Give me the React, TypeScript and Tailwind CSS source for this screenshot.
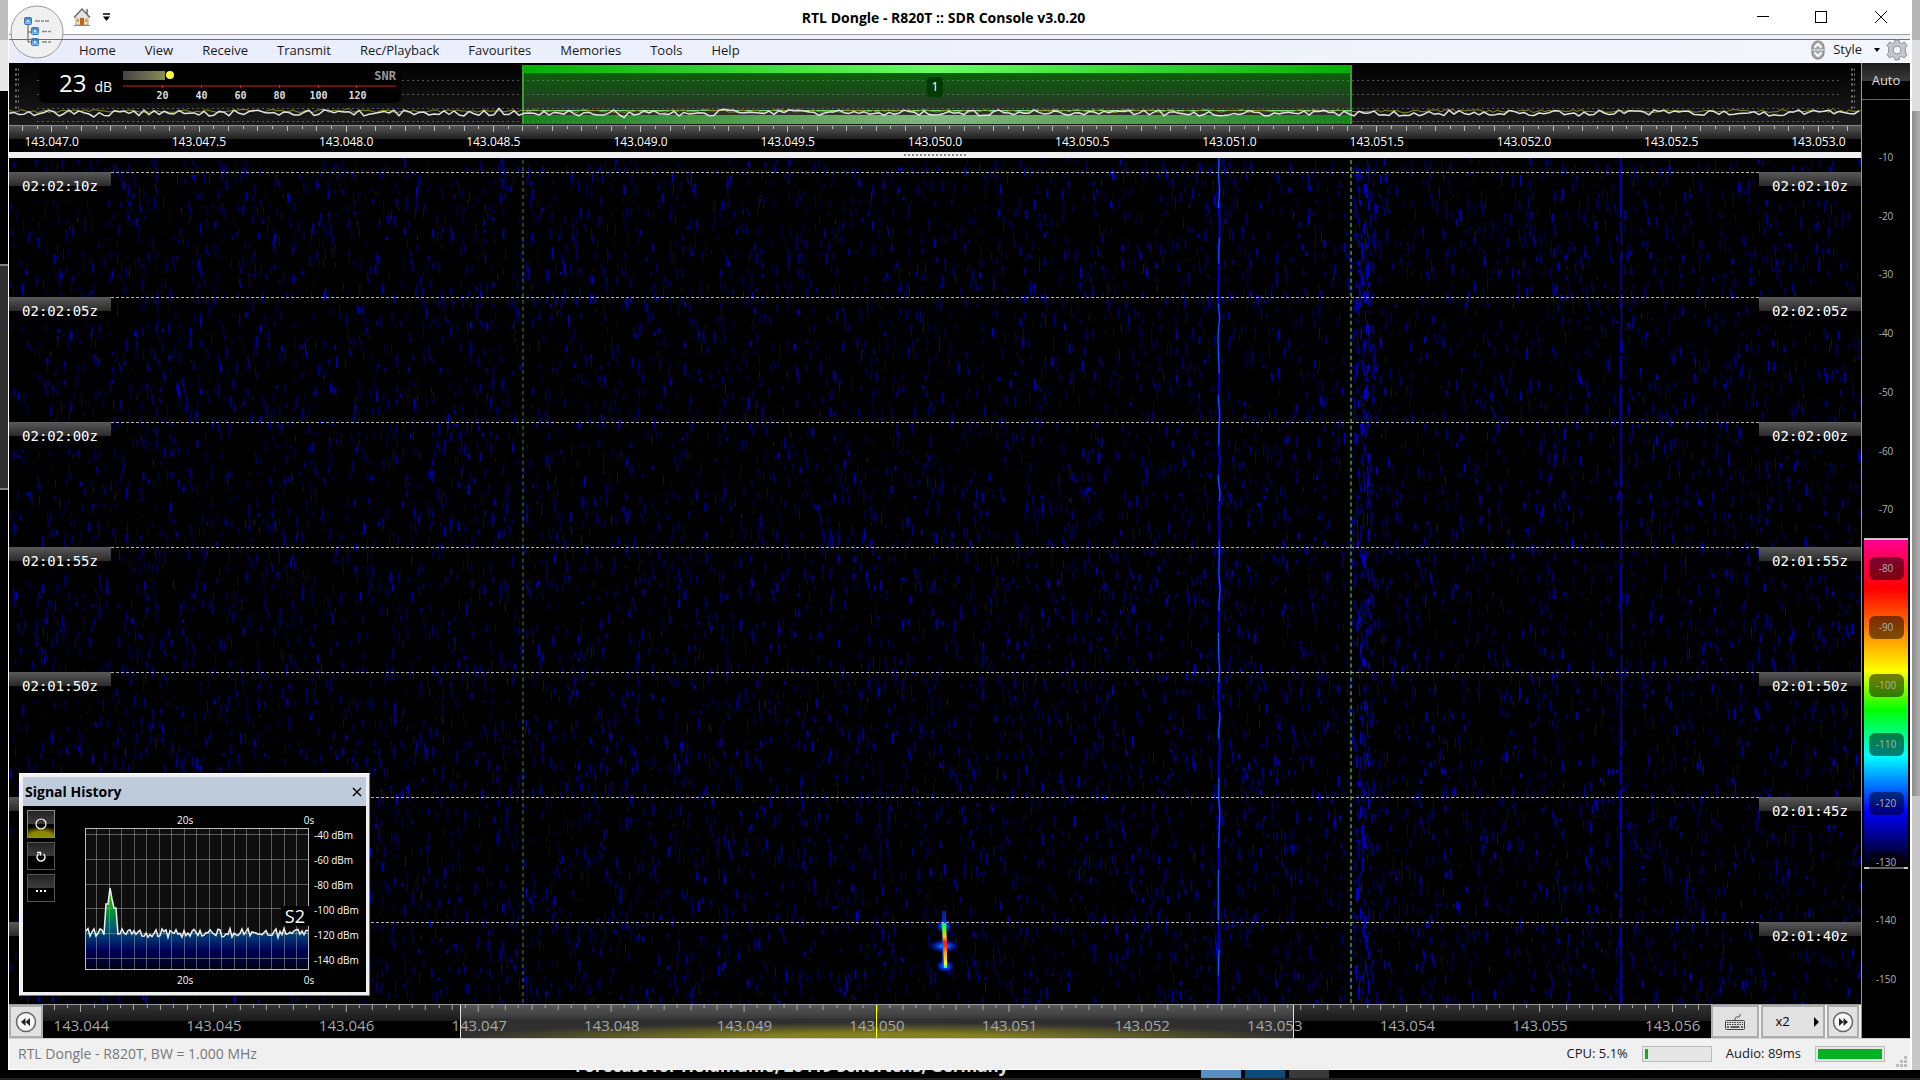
import type { ReactNode } from 'react';
import { useState } from 'react';

const FALL_W = 1852;
const FALL_H = 847;

const menuItems = ['Home', 'View', 'Receive', 'Transmit', 'Rec/Playback', 'Favourites', 'Memories', 'Tools', 'Help'];
const topFrequencies = Array.from({ length: 13 }, (_, i) => (143.047 + i * 0.0005).toFixed(4).replace(/(\d)$/, '.$1'));
const bottomFrequencies = Array.from({ length: 13 }, (_, i) => (143.044 + i * 0.001).toFixed(3));
const timeMarks = ['02:02:10z', '02:02:05z', '02:02:00z', '02:01:55z', '02:01:50z', '02:01:45z', '02:01:40z'];
const levels = Array.from({ length: 15 }, (_, i) => -10 * (i + 1));
const powerLabels = ['-40 dBm', '-60 dBm', '-80 dBm', '-100 dBm', '-120 dBm', '-140 dBm'];

// small seeded generator, so the noise is the same on every render
function createRandom(seed: number) {
  let s = seed;
  return () => {
    s = (s * 1664525 + 1013904223) % 4294967296;
    return s / 4294967296;
  };
}

function streaks(seed: number, count: number, x0: number, x1: number, maxLen: number) {
  const rnd = createRandom(seed);
  let d = '';
  for (let i = 0; i < count; i++) {
    const x = Math.floor(x0 + rnd() * (x1 - x0));
    const y = Math.floor(rnd() * FALL_H);
    const len = 3 + Math.floor(rnd() * maxLen);
    const lean = rnd() > 0.7 ? 1 : 0;
    d += `M${x + 0.5} ${y}l${lean} ${len}`;
  }
  return d;
}

function wobble(seed: number, x: number, step: number, amount: number) {
  const rnd = createRandom(seed);
  let d = `M${x} 0`;
  for (let y = step; y < FALL_H + step; y += step) {
    d += `L${(x + (rnd() - 0.5) * amount).toFixed(1)} ${y}`;
  }
  return d;
}

function trace(seed: number, width: number, base: number, amount: number, step: number) {
  const rnd = createRandom(seed);
  let d = '';
  for (let x = 0; x <= width; x += step) {
    const spike = rnd() > 0.95 ? (rnd() - 0.5) * amount : 0;
    const y = base + (rnd() - 0.5) * amount + spike;
    d += `${x === 0 ? 'M' : 'L'}${x} ${y.toFixed(1)}`;
  }
  return d;
}

const noise = [
  { color: '#000040', width: 2, d: streaks(11, 4600, 0, FALL_W, 9) },
  { color: '#00006c', width: 1, d: streaks(23, 4200, 0, FALL_W, 10) },
  { color: '#000090', width: 1, d: streaks(37, 2800, 0, FALL_W, 10) },
  { color: '#0000c0', width: 1, d: streaks(53, 1100, 0, FALL_W, 9) },
  { color: '#0000a8', width: 2, d: streaks(71, 520, 0, FALL_W, 7) },
  { color: '#000078', width: 2, d: streaks(83, 150, 1344, 1366, 12) },
  { color: '#0000c8', width: 1, d: streaks(97, 170, 1347, 1360, 12) },
];
const carrier = wobble(5, 1210, 16, 2);
const weakCarrier = wobble(8, 1612, 20, 1);
const spectrumPeak = trace(31, FALL_W, 48, 3, 4);
const spectrumLive = trace(47, FALL_W, 50, 6, 5);

function ticks(first: number, spacing: number, width: number, majorAt: number, major: number) {
  let d = '';
  for (let i = 0; first + i * spacing < width; i++) {
    const x = Math.round(first + i * spacing) + 0.5;
    const h = (i - majorAt) % 10 === 0 ? major : (i - majorAt) % 2 === 0 ? 5 : 3;
    d += `M${x} 0v${h}`;
  }
  return d;
}

function IconHome() {
  return (
    <svg width="18" height="20" viewBox="0 0 18 20">
      <rect x="13" y="2" width="2" height="5" fill="#9a8a80" />
      <path d="M3 9h12v9H3z" fill="#e9e2c8" stroke="#a0a098" strokeWidth="1" />
      <path d="M1 10.500L9 2l8 8.500" fill="#e4e4e4" stroke="#6a6a6a" strokeWidth="1.500" />
      <rect x="7" y="11" width="4" height="7" fill="#c4601c" />
      <path d="M4 12h2v3H4zM12 12h2v3h-2z" fill="#e0a030" />
      <path d="M1 18.500h16" stroke="#888" strokeWidth="1" />
    </svg>
  );
}

function AppOrb() {
  return (
    <svg width="54" height="54" viewBox="0 0 54 54">
      <defs>
        <linearGradient id="orbNode" x1="0" y1="0" x2="0" y2="1">
          <stop offset="0" stopColor="#3f7fc0" />
          <stop offset="1" stopColor="#8cc0ea" />
        </linearGradient>
      </defs>
      <circle cx="27" cy="27" r="26" fill="#f0f0f0" stroke="#999" />
      <path d="M18 20v17h5M18 27h5" fill="none" stroke="#555" strokeWidth="1" />
      <g fill="url(#orbNode)" stroke="#3a76b4" strokeWidth="1">
        <rect x="14.500" y="12.500" width="7" height="7" rx="1" />
        <rect x="21.500" y="22.500" width="7" height="7" rx="1" />
        <rect x="21.500" y="33.500" width="7" height="7" rx="1" />
      </g>
      <path d="M17 15h2v2h-2zM24 25h2v2h-2zM24 36h2v2h-2z" fill="#d8ecff" />
      <path d="M25 16h14M32 26.500h9M32 37h9" stroke="#888" strokeWidth="1.500" strokeDasharray="5 1 3 1" />
      <path d="M0 34.500h54" stroke="#6b6f6b" />
    </svg>
  );
}

function IconGear() {
  return (
    <svg width="22" height="22" viewBox="0 0 22 22">
      <g fill="#c4c7cc" stroke="#8d9196" strokeWidth="1">
        <path d="M9 1h4l.6 2.800 2 .9L18.300 3 21 6.500l-1.800 2.300.3 2.200-.3 2.200L21 15.500 18.300 19l-2.700-1.700-2 .9L13 21H9l-.6-2.800-2-.9L3.700 19 1 15.500l1.800-2.300-.3-2.200.3-2.200L1 6.500 3.700 3l2.700 1.700 2-.9z" strokeLinejoin="round" />
        <circle cx="11" cy="11" r="4" fill="#f2f5fc" />
      </g>
    </svg>
  );
}

function IconUpDown() {
  return (
    <svg width="14" height="20" viewBox="0 0 14 20">
      <rect x="1" y="1" width="12" height="18" rx="6" fill="#a8a8a8" stroke="#777" />
      <path d="M1 10h12" stroke="#eee" />
      <path d="M3.500 7.500L7 4l3.500 3.500M3.500 12.500L7 16l3.500-3.500" fill="none" stroke="#fff" strokeWidth="2" />
    </svg>
  );
}

function IconSkip({ forward = false }: { forward?: boolean }) {
  return (
    <svg width="22" height="22" viewBox="0 0 22 22">
      <circle cx="11" cy="11" r="9.500" fill="#f6f6f6" stroke="#666" strokeWidth="1.500" />
      {forward ? (
        <path d="M7 7l4.500 4L7 15zM11.500 7l4.500 4-4.500 4z" fill="#222" />
      ) : (
        <path d="M15 7l-4.500 4 4.500 4zM10.500 7L6 11l4.500 4z" fill="#222" />
      )}
    </svg>
  );
}

function IconKeyboard() {
  return (
    <svg width="22" height="18" viewBox="0 0 22 18">
      <path d="M11 7c0-3 1-3 3-3s2-1 2-3" fill="none" stroke="#444" strokeWidth="1" />
      <rect x="1.500" y="7.500" width="19" height="9" rx="1" fill="#ddd" stroke="#444" />
      <path d="M3 9.500h16M3 11.500h16" stroke="#333" strokeWidth="1.200" strokeDasharray="1.500 1" />
      <path d="M3 14h2M6.500 14h9M17 14h2" stroke="#333" strokeWidth="1.500" />
    </svg>
  );
}

function TitleBar() {
  return (
    <header className="flex h-[35px] shrink-0 items-center border-b border-[#a0a0a0] bg-white">
      <div className="flex w-[206px] items-center gap-2 pl-16">
        <button aria-label="Start page">
          <IconHome />
        </button>
        <button aria-label="Customise toolbar" className="pl-1">
          <svg width="7" height="8" viewBox="0 0 7 8">
            <path d="M0 1h7" stroke="#000" strokeWidth="1.500" />
            <path d="M0 3.500h7L3.500 8z" />
          </svg>
        </button>
      </div>
      <h1 className="flex-1 pt-px text-center text-sm font-bold text-black">RTL Dongle - R820T :: SDR Console v3.0.20</h1>
      <div className="flex w-[238px] justify-end pr-[2px]">
        <button className="flex w-[58px] justify-center" aria-label="Minimise">
          <svg width="12" height="12" viewBox="0 0 12 12"><path d="M0 5.500h12" stroke="#000" /></svg>
        </button>
        <button className="flex w-[58px] justify-center" aria-label="Maximise">
          <svg width="12" height="12" viewBox="0 0 12 12"><rect x=".5" y=".5" width="11" height="11" fill="none" stroke="#000" /></svg>
        </button>
        <button className="flex w-[58px] justify-center pl-1" aria-label="Close">
          <svg width="12" height="12" viewBox="0 0 12 12"><path d="M0 0l12 12M12 0L0 12" stroke="#000" /></svg>
        </button>
      </div>
    </header>
  );
}

function MenuBar() {
  return (
    <nav className="mt-1 flex h-6 shrink-0 items-center justify-between border-t border-[#6b6f6b] bg-linear-to-r from-[#e9edfb] to-[#f3f6fd] pl-14 text-[13px] text-[#1a1a1a]">
      <div className="flex gap-px pb-[2px]">
        {menuItems.map(item => (
          <button key={item} className="px-[14px]">{item}</button>
        ))}
      </div>
      <div className="flex items-center pr-[2px] pb-1">
        <IconUpDown />
        <button className="flex items-center gap-3 pr-[6px] pl-2">
          Style
          <svg width="6" height="4" viewBox="0 0 6 4"><path d="M0 0h6L3 4z" /></svg>
        </button>
        <button aria-label="Settings"><IconGear /></button>
      </div>
    </nav>
  );
}

function SignalMeter() {
  return (
    <div className="absolute top-1 left-[30px] flex h-9 w-[362px] rounded-md bg-black text-white">
      <div className="flex w-[84px] items-baseline gap-2 pl-5">
        <span className="text-2xl">23</span>
        <span className="text-sm">dB</span>
      </div>
      <div className="w-[273px] font-['DejaVu_Sans_Mono',monospace] font-bold">
        <div className="flex h-4 items-center justify-between">
          <div className="flex items-center gap-px">
            <div className="h-[9px] w-[42px] bg-linear-to-r from-[#444] to-[#8c8c50]" />
            <div className="size-2 rounded-full bg-[#ffff40]" />
          </div>
          <span className="pt-px text-xs text-[#999]">SNR</span>
        </div>
        <svg className="mt-[2px] block h-[3px] w-full" viewBox="0 0 273 3" preserveAspectRatio="none">
          <path d="M0 1h273M39.500 0v3M78.500 0v3M117.500 0v3M156.500 0v3M195.500 0v3M233.500 0v3" stroke="#d02020" />
        </svg>
        <div className="flex pl-5 text-[10px] leading-4 text-[#ddd]">
          {[20, 40, 60, 80, 100, 120].map(n => (
            <span key={n} className="w-[39px] text-center">{n}</span>
          ))}
        </div>
      </div>
    </div>
  );
}

function Spectrum() {
  const axisMarks = [6, 11, 16, 21, 27, 33, 38, 44];
  return (
    <section className="relative h-[62px] shrink-0 overflow-hidden bg-black">
      <svg className="block h-full w-full" viewBox="0 0 1852 62" preserveAspectRatio="none">
        <defs>
          <linearGradient id="spectrumBack" x1="0" y1="0" x2="0" y2="1">
            <stop offset="0" stopColor="#000" />
            <stop offset="1" stopColor="#1c1c1c" />
          </linearGradient>
          <linearGradient id="passTop">
            <stop offset="0" stopColor="#00b000" />
            <stop offset=".5" stopColor="#66ff66" />
            <stop offset="1" stopColor="#00b000" />
          </linearGradient>
          <linearGradient id="passBody" x1="0" y1="0" x2="0" y2="1">
            <stop offset="0" stopColor="#006c00" />
            <stop offset=".75" stopColor="#2c322c" />
          </linearGradient>
          <linearGradient id="passFoot">
            <stop offset="0" stopColor="#148014" />
            <stop offset=".5" stopColor="#84b884" />
            <stop offset="1" stopColor="#148014" />
          </linearGradient>
        </defs>
        <rect width="1852" height="62" fill="url(#spectrumBack)" />
        <rect x="513" y="2" width="830" height="59" fill="url(#passBody)" />
        <rect x="513" y="2" width="830" height="8" fill="url(#passTop)" />
        <rect x="513" y="52" width="830" height="9" fill="url(#passFoot)" />
        <path d="M514 2v59M1342 2v59" stroke="#3a9a3a" strokeWidth="2" />
        <path d="M28 17.500h1803M28 31.500h1803M28 45.500h1803M28 58.500h1803" stroke="#888" strokeOpacity=".6" strokeDasharray="2 3" />
        <path d="M513 47.500h830" stroke="#7be07b" />
        {axisMarks.map(y => (
          <path key={y} d={`M6 ${y + 0.5}h4M1842 ${y + 0.5}h4`} stroke="#777" strokeWidth="2" strokeDasharray="2 1" />
        ))}
        <path d={spectrumPeak} fill="none" stroke="#8c8c14" />
        <path d={spectrumLive} fill="none" stroke="#e0e0e0" strokeWidth="1.500" strokeLinejoin="round" />
      </svg>
      <SignalMeter />
      <span className="absolute top-[14px] left-1/2 -ml-2 flex h-5 w-4 items-center justify-center rounded-sm bg-[#003c00] text-[13px] text-white">1</span>
    </section>
  );
}

function TopScale() {
  return (
    <div className="h-[27px] shrink-0 overflow-hidden border-t border-[#888] bg-linear-to-b from-[#555] via-[#222] via-48% to-black to-52%">
      <svg className="block h-[6px] w-full" viewBox="0 0 1852 6" preserveAspectRatio="none">
        <path d={ticks(12.9, 14.72, 1852, 2, 6)} stroke="#bbb" />
      </svg>
      <div className="-mx-[31px] flex text-xs leading-5 text-white">
        {topFrequencies.map(f => (
          <span key={f} className="flex-1 text-center">{f}</span>
        ))}
      </div>
    </div>
  );
}

function TimeLabel({ children }: { children: ReactNode }) {
  return (
    <span className="flex h-7 w-[102px] items-center justify-center bg-linear-to-b from-[#5a5a5a] via-[#2a2a2a] via-50% to-black to-50% font-['DejaVu_Sans_Mono',monospace] text-sm text-white">
      {children}
    </span>
  );
}

function Waterfall() {
  return (
    <section className="relative min-h-0 flex-1 overflow-hidden bg-black">
      <svg className="absolute inset-0 h-full w-full" viewBox="0 0 1852 847" preserveAspectRatio="none">
        <defs>
          <radialGradient id="echo">
            <stop offset="0" stopColor="#00e0ff" />
            <stop offset=".35" stopColor="#0050ff" stopOpacity=".9" />
            <stop offset="1" stopColor="#0000ff" stopOpacity="0" />
          </radialGradient>
          <linearGradient id="echoCore" x1="0" y1="0" x2="0" y2="1">
            <stop offset="0" stopColor="#00ff60" />
            <stop offset=".15" stopColor="#60ff00" />
            <stop offset=".3" stopColor="#ffd000" />
            <stop offset=".42" stopColor="#ff2000" />
            <stop offset=".52" stopColor="#ff3000" />
            <stop offset=".65" stopColor="#ffa000" />
            <stop offset=".9" stopColor="#ffff00" />
            <stop offset="1" stopColor="#00ffb0" />
          </linearGradient>
        </defs>
        {noise.map((n, i) => (
          <path key={i} d={n.d} fill="none" stroke={n.color} strokeWidth={n.width} />
        ))}
        <path d={carrier} fill="none" stroke="#0000d8" strokeWidth="2" />
        <path d={carrier} fill="none" stroke="#0068ff" strokeWidth="1" strokeDasharray="50 30 26 40 70 22" />
        <path d={weakCarrier} fill="none" stroke="#0000c8" strokeWidth="1.500" strokeDasharray="60 3 24 6 40 2" />
        <path d="M871 600V730" stroke="#000050" />
        <ellipse cx="935" cy="769" rx="9" ry="8" fill="url(#echo)" />
        <ellipse cx="935" cy="789" rx="16" ry="7" fill="url(#echo)" />
        <ellipse cx="936" cy="809" rx="10" ry="7" fill="url(#echo)" />
        <path d="M935 754v58" stroke="#0040ff" strokeWidth="4" strokeOpacity=".6" />
        <path d="M933 766h4l1 20v25h-3l-1-22z" fill="url(#echoCore)" />
        <path d="M514 2v845" stroke="#3f8a3f" strokeWidth="1" strokeDasharray="4 3" />
        <path d="M1342 2v845" stroke="#3a723a" strokeWidth="2" strokeDasharray="4 3" />
      </svg>
      <div className="relative flex flex-col pt-[14px]">
        {timeMarks.map(t => (
          <div key={t} className="flex h-[125px] shrink-0 items-start">
            <TimeLabel>{t}</TimeLabel>
            <div className="flex-1 border-t border-dashed border-[#b0b0b0]" />
            <TimeLabel>{t}</TimeLabel>
          </div>
        ))}
      </div>
      <SignalHistory />
    </section>
  );
}

function ToolButton({ label, active = false, children }: { label: string; active?: boolean; children: ReactNode }) {
  return (
    <button
      aria-label={label}
      className={
        active
          ? 'flex size-7 items-center justify-center border border-[#888] bg-[radial-gradient(ellipse_90%_42%_at_bottom,#908c00_0%,#8a8600_50%,transparent_100%),linear-gradient(#222,#3c3c3c_48%,#000_50%)]'
          : 'flex size-7 items-center justify-center border border-[#555] bg-[linear-gradient(#222,#3c3c3c_48%,#000_50%)]'
      }
    >
      {children}
    </button>
  );
}

function HistoryChart() {
  const rnd = createRandom(19);
  let line = 'M0 101';
  for (let x = 1; x <= 223; x += 2) {
    let y = 105 + (rnd() - 0.5) * 9;
    if (x >= 20 && x <= 31) y = x < 24 ? 76 : x < 27 ? 76 - (x - 23) * 8 : x < 29 ? 68 + (x - 26) * 3 : 80;
    line += `L${x} ${y.toFixed(1)}`;
  }
  let grid = '';
  for (let i = 0; i < 17; i++) grid += `M${Math.round(11 + i * 12.5) + 0.5} 0v142`;
  for (let i = 0; i < 6; i++) grid += `M0 ${Math.round(6 + i * 24.8) + 0.5}h224`;
  return (
    <svg className="block" width="224" height="142" viewBox="0 0 224 142">
      <defs>
        <linearGradient id="history" gradientUnits="userSpaceOnUse" x1="0" y1="55" x2="0" y2="142">
          <stop offset="0" stopColor="#60c000" />
          <stop offset=".28" stopColor="#00a020" />
          <stop offset=".5" stopColor="#006070" />
          <stop offset=".65" stopColor="#002c70" />
          <stop offset=".78" stopColor="#000058" />
          <stop offset="1" stopColor="#000010" />
        </linearGradient>
      </defs>
      <rect width="224" height="142" fill="#0e0e0e" />
      <path d={`${line}V142H0z`} fill="url(#history)" />
      <path d={grid} stroke="#aaa" strokeOpacity=".5" />
      <path d={line} fill="none" stroke="#eee" strokeWidth="1.500" />
      <rect x=".5" y=".5" width="223" height="141" fill="none" stroke="#bbb" />
    </svg>
  );
}

function TimeAxis() {
  return (
    <div className="-mr-2 flex justify-between pl-[92px]">
      <span>20s</span>
      <span className="w-4 text-center">0s</span>
    </div>
  );
}

function SignalHistory() {
  const [open, setOpen] = useState(true);
  if (!open) return null;

  return (
    <div className="absolute bottom-2 left-[10px] w-[351px] border border-[#fff] border-r-[#777] border-b-[#777] bg-[#f0f0f0] p-[3px]">
      <div className="flex h-[29px] items-center justify-between bg-[#bdcbda] pr-1 pl-[2px]">
        <h2 className="pt-px text-sm font-bold text-black">Signal History</h2>
        <button aria-label="Close" onClick={() => setOpen(false)}>
          <svg width="10" height="10" viewBox="0 0 10 10"><path d="M1 1l8 8M9 1L1 9" stroke="#000" strokeWidth="1.500" /></svg>
        </button>
      </div>
      <div className="flex h-[186px] bg-black text-[10px] leading-4 text-white">
        <div className="flex w-[62px] flex-col gap-1 pt-1 pl-1">
          <ToolButton label="Record" active>
            <svg width="12" height="12" viewBox="0 0 12 12"><circle cx="6" cy="6" r="5" fill="none" stroke="#fff" strokeWidth="1.200" /></svg>
          </ToolButton>
          <ToolButton label="Reset">
            <svg width="10" height="11" viewBox="0 0 10 11"><path d="M7.500 3a4 4 0 1 1-5 0M1 1.500h3.500v3" fill="none" stroke="#fff" strokeWidth="1.400" /></svg>
          </ToolButton>
          <ToolButton label="More">
            <svg width="10" height="12" viewBox="0 0 10 12"><path d="M0 9h2M4 9h2M8 9h2" stroke="#fff" strokeWidth="2" /></svg>
          </ToolButton>
        </div>
        <div className="flex flex-col pt-[6px]">
          <TimeAxis />
          <div className="relative">
            <HistoryChart />
            <span className="absolute right-0 bottom-[44px] bg-black px-1 text-lg leading-5">S2</span>
          </div>
          <div className="mt-[2px]">
            <TimeAxis />
          </div>
        </div>
        <div className="flex flex-col pt-[17px] pl-[5px]">
          {powerLabels.map(p => (
            <span key={p} className="leading-[25px] whitespace-nowrap">{p}</span>
          ))}
        </div>
      </div>
    </div>
  );
}

function BottomScale() {
  const button = 'flex items-center justify-center border-2 border-[#adadad] bg-[#e1e1e1]';
  return (
    <div className="flex h-[34px] shrink-0 border-t border-[#999] bg-[#f0f0f0]">
      <button className={`${button} w-[34px]`} aria-label="Tune down">
        <IconSkip />
      </button>
      <div className="relative flex-1 overflow-hidden bg-linear-to-b from-[#333] via-[#1a1a1a] via-48% to-black to-50%">
        <div className="absolute inset-y-0 left-1/4 w-1/2 border-x border-[#e0e0e0] bg-[radial-gradient(ellipse_50%_45%_at_bottom,#84801c_0%,#84801c_30%,transparent_100%),linear-gradient(#585858,#3a3a3a_40%,#303030_42%)]" />
        <svg className="relative block h-[7px] w-full" viewBox="0 0 1669 7" preserveAspectRatio="none">
          <path d={ticks(10.8, 13.27, 1669, 2, 7)} stroke="#aaa" />
        </svg>
        <div className="relative -mx-7 flex text-[15px] leading-[26px] text-[#a8a8a8]">
          {bottomFrequencies.map(f => (
            <span key={f} className="flex-1 text-center">{f}</span>
          ))}
        </div>
        <div className="absolute inset-y-0 left-1/2 -ml-px w-px bg-[#ffff00]" />
      </div>
      <div className="flex gap-[2px] pr-[2px] text-[13px] text-black">
        <button className={`${button} w-12`} aria-label="Enter frequency">
          <IconKeyboard />
        </button>
        <button className={`${button} w-16 gap-6 pl-2`}>
          x2
          <svg width="5" height="10" viewBox="0 0 5 10"><path d="M0 0l5 5-5 5z" /></svg>
        </button>
        <button className={`${button} w-8`} aria-label="Tune up">
          <IconSkip forward />
        </button>
      </div>
    </div>
  );
}

function LevelColumn() {
  return (
    <aside className="flex w-[49px] shrink-0 flex-col border-l border-[#999] bg-black">
      <button className="h-[37px] border-b border-[#666] bg-linear-to-b from-[#1c1c1c] via-[#3a3a3a] via-49% to-black to-50% text-[13px] text-[#ddd]">
        Auto
      </button>
      <div className="relative mt-7 mb-[29px] flex flex-1 flex-col px-[2px] text-[10px] text-[#b0b0b0]">
        <div className="absolute inset-x-[2px] top-[46.5%] h-[37.6%] border-y-2 border-[#c8c8c8] bg-[linear-gradient(#ff0090,#f00_15%,#ff0_40%,#0f0_52%,#0ff_66%,#00f_83%,#000)]" />
        {levels.map(level => (
          <div key={level} className="relative flex flex-1 items-center justify-center">
            <span className="flex h-[23px] w-[35px] items-center justify-center rounded-md bg-black/50">{level}</span>
          </div>
        ))}
      </div>
    </aside>
  );
}

function Meter({ label, value }: { label: string; value: number }) {
  return (
    <div role="meter" aria-label={label} aria-valuenow={value} className="h-4 w-[70px] border border-[#bcbcbc] bg-[#e6e6e6] p-[2px]">
      <div className="h-full bg-[#06b025]" style={{ width: `${value}%` }} />
    </div>
  );
}

function StatusBar() {
  return (
    <footer className="flex h-8 shrink-0 items-center border-t border-b border-t-[#d0d0d0] border-b-white bg-[#f0f0f0] pl-[9px] text-[13px] text-[#1a1a1a]">
      <span className="flex-1 text-sm text-[#777]">RTL Dongle - R820T, BW = 1.000 MHz</span>
      <span className="mr-[14px]">CPU: 5.1%</span>
      <Meter label="CPU" value={5} />
      <span className="mx-[14px]">Audio: 89ms</span>
      <Meter label="Audio" value={100} />
      <svg className="mr-[2px] ml-[11px] self-end" width="12" height="13" viewBox="0 0 12 13">
        <path d="M8 0h3v3H8zM4 4h3v3H4zM8 4h3v3H8zM0 8h3v3H0zM4 8h3v3H4zM8 8h3v3H8z" fill="#bcbcbc" />
      </svg>
    </footer>
  );
}

// strips of the desktop that stay visible round the main window
function DesktopLeft() {
  return (
    <div className="flex w-2 shrink-0 flex-col bg-black">
      <div className="h-10 bg-[#bebebe]" />
      <div className="h-[51px] bg-[#e8e8e8]" />
      <div className="mt-[173px] h-[226px] border-y-2 border-[#808080] bg-[#303030]" />
    </div>
  );
}

function DesktopRight() {
  return (
    <div className="flex w-2 shrink-0 flex-col bg-[#c8c8c8]">
      <div className="h-10 bg-[#b4b4b4]" />
      <div className="h-[71px] bg-[#dedede]" />
      <div className="h-[685px] bg-linear-to-r from-[#8c8c8c] to-[#b0b0b0]" />
    </div>
  );
}

function DesktopBottom() {
  return (
    <div className="flex h-[10px] shrink-0 items-end overflow-hidden border-b-2 border-[#222] bg-black pl-[575px]">
      <span className="w-[626px] text-[17px] leading-6 font-bold whitespace-nowrap text-[#ddd]">Forecast for Heidmühle, 26419 Schortens, Germany</span>
      <div className="flex h-2 gap-1">
        <div className="w-10 bg-[#5a8fc4]" />
        <div className="w-10 bg-[#0a4a7c]" />
        <div className="w-10 bg-[#3a3a3a]" />
      </div>
    </div>
  );
}

export default function App() {
  return (
    <div className="flex h-screen flex-col overflow-hidden bg-black font-['Open_Sans','Noto_Sans',sans-serif]">
      <div className="flex min-h-0 flex-1">
        <DesktopLeft />
        <div className="relative flex min-w-0 flex-1 flex-col border-r-2 border-l border-white bg-[#eef1fa]">
          <TitleBar />
          <MenuBar />
          <main className="flex min-h-0 flex-1">
            <div className="flex min-w-0 flex-1 flex-col">
              <Spectrum />
              <TopScale />
              <div className="flex h-[6px] shrink-0 items-center justify-center bg-[#f0f0f0]">
                <div className="w-[62px] border-t-2 border-dotted border-[#888]" />
              </div>
              <Waterfall />
              <BottomScale />
            </div>
            <LevelColumn />
          </main>
          <StatusBar />
          <div className="absolute top-[5px] left-[1px]">
            <AppOrb />
          </div>
        </div>
        <DesktopRight />
      </div>
      <DesktopBottom />
    </div>
  );
}
